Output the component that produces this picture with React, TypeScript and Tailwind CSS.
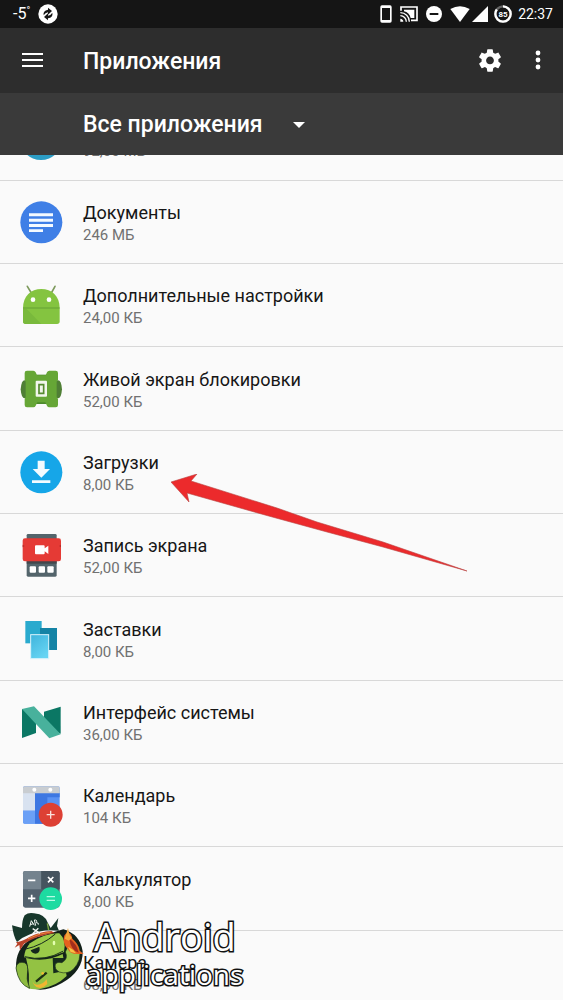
import { ReactNode } from 'react'

interface AppEntry {
  name: string
  size: string
  icon?: ReactNode
}

const apps: AppEntry[] = [
  { name: 'Документы', size: '246 МБ', icon: <DocsIcon /> },
  { name: 'Дополнительные настройки', size: '24,00 КБ', icon: <RobotIcon /> },
  { name: 'Живой экран блокировки', size: '52,00 КБ', icon: <LockScreenIcon /> },
  { name: 'Загрузки', size: '8,00 КБ', icon: <DownloadsIcon /> },
  { name: 'Запись экрана', size: '52,00 КБ', icon: <RecorderIcon /> },
  { name: 'Заставки', size: '8,00 КБ', icon: <ScreensaverIcon /> },
  { name: 'Интерфейс системы', size: '36,00 КБ', icon: <NougatIcon /> },
  { name: 'Календарь', size: '104 КБ', icon: <CalendarIcon /> },
  { name: 'Калькулятор', size: '8,00 КБ', icon: <CalculatorIcon /> },
  { name: 'Камера', size: '68,00 КБ' },
]

function AppIcon({ children }: { children: ReactNode }) {
  return (
    <svg viewBox="0 0 126 126" className="w-full h-full overflow-visible" aria-hidden="true">
      {children}
    </svg>
  )
}

function DocsIcon() {
  return (
    <AppIcon>
      <circle cx="64" cy="64" r="63" fill="#3f7fe6" />
      <path d="M27 37h72v9H27zM27 53h72v9H27zM27 69h72v9H27zM27 85h42v8H27z" fill="#f4faff" />
    </AppIcon>
  )
}

function RobotIcon() {
  return (
    <AppIcon>
      <path d="M22 7l12 20M105 7L94 27" stroke="#7d9a5c" strokeWidth="5" strokeLinecap="round" />
      <path d="M9 72C9 36 33 15 64 15s55 21 55 57v40q0 8-8 8H17q-8 0-8-8z" fill="#84c440" />
      <path d="M20 75l44 45H17q-8 0-8-8V75z" fill="#79b93c" />
      <path d="M9 72h110" stroke="#64a034" strokeWidth="3" />
      <circle cx="39" cy="47" r="7" fill="#fff" />
      <circle cx="87" cy="47" r="7" fill="#fff" />
    </AppIcon>
  )
}

function LockScreenIcon() {
  return (
    <AppIcon>
      <path d="M14 37h100q10 0 12 27-2 27-12 27H14Q4 91 2 64 4 37 14 37z" fill="#4f7f35" />
      <path d="M40 20h48v88H40z" fill="#4c8a2c" />
      <path
        d="M21 8h19q5 0 7 5l4 9h26l4-9q2-5 7-5h19q7 0 7 7v20l-4 6v46l4 6v18q0 7-7 7H88q-5 0-7-5l-5-10H52l-5 10q-2 5-7 5H21q-7 0-7-7V93l3-6V41l-3-6V15q0-7 7-7z"
        fill="#66a636"
      />
      <rect x="47" y="38" width="34" height="48" rx="3" fill="#f2f7ec" />
      <path d="M57 50h14v26H57z" fill="none" stroke="#568c30" strokeWidth="5" />
    </AppIcon>
  )
}

function DownloadsIcon() {
  return (
    <AppIcon>
      <circle cx="64" cy="64" r="63" fill="#16a6e8" />
      <path d="M53 29h21v25h16L64 80 38 54h15zM36 88h55v8H36z" fill="#f4fbff" />
    </AppIcon>
  )
}

function RecorderIcon() {
  return (
    <AppIcon>
      <rect x="20" y="0" width="90" height="128" rx="4" fill="#53646b" />
      <path d="M20 80h90v9H20z" fill="#43474c" />
      <rect x="8" y="13" width="115" height="69" rx="7" fill="#e53a35" />
      <path d="M8 40l6-4-6-4zM123 40l-6-4 6-4z" fill="#b52b28" />
      <path d="M48 34h23q3 0 3 3v6l11-8v25l-11-8v6q0 3-3 3H48q-3 0-3-3V37q0-3 3-3z" fill="#fff" />
      <rect x="29" y="97" width="19" height="19" rx="3" fill="#fff" />
      <rect x="56" y="97" width="19" height="19" rx="3" fill="#fff" />
      <rect x="82" y="97" width="19" height="19" rx="3" fill="#fff" />
    </AppIcon>
  )
}

function ScreensaverIcon() {
  return (
    <AppIcon>
      <defs>
        <linearGradient id="pane" x1="0" y1="0" x2="0.6" y2="1">
          <stop offset="0" stopColor="#3fb4dc" />
          <stop offset="1" stopColor="#66d4f3" />
        </linearGradient>
      </defs>
      <rect x="16" y="9" width="49" height="67" fill="#2aaace" />
      <rect x="60" y="30" width="51" height="66" fill="#1483a5" />
      <rect x="32" y="50" width="54" height="72" fill="url(#pane)" stroke="#d9f4fc" strokeWidth="3" />
    </AppIcon>
  )
}

function NougatIcon() {
  return (
    <AppIcon>
      <path d="M6 24l42 10v62L6 111z" fill="#0b7764" />
      <path d="M72 32l50-15v81L72 75z" fill="#0b7764" />
      <path d="M6 24l36-8 80 84-34 12z" fill="#48b19c" />
    </AppIcon>
  )
}

function CalendarIcon() {
  return (
    <AppIcon>
      <rect x="9" y="7" width="110" height="112" rx="5" fill="#5a92f4" />
      <path d="M9 27h36v53H9z" fill="#d8e2f0" />
      <path d="M45 27h74v13H82v79H45z" fill="#3d77e2" />
      <path d="M9 80h36v39H14q-5 0-5-5z" fill="#6ba0f6" />
      <path d="M14 7h100q5 0 5 5v16H9V12q0-5 5-5z" fill="#c9cdd1" />
      <circle cx="43" cy="17" r="6" fill="#fff" />
      <circle cx="91" cy="17" r="6" fill="#fff" />
      <circle cx="92" cy="92" r="36" fill="#dd4034" />
      <path d="M92 80v24M80 92h24" stroke="#fbe0dc" strokeWidth="4" />
    </AppIcon>
  )
}

function CalculatorIcon() {
  return (
    <AppIcon>
      <rect x="9" y="9" width="110" height="110" rx="7" fill="#52616d" />
      <path d="M16 9h48v55H9V16q0-7 7-7z" fill="#74838e" />
      <path d="M64 9h48q7 0 7 7v48H64z" fill="#46545f" />
      <path d="M24 37h22M24 91h22M35 80v22M84 27l16 16M100 27L84 43" stroke="#fff" strokeWidth="5" />
      <circle cx="92" cy="92" r="34" fill="#1ddba1" />
      <path d="M80 86h25M80 97h25" stroke="#b8fbe5" strokeWidth="4" />
    </AppIcon>
  )
}

function StatusBar() {
  return (
    <div className="h-7 shrink-0 flex items-center justify-between bg-[#151515] pl-[13px] pr-2.5 text-white">
      <div className="flex items-center gap-2">
        <span className="text-base leading-4">
          -5<sup className="text-[10px]">°</sup>
        </span>
        <svg viewBox="0 0 60 60" className="w-5 h-5" aria-hidden="true">
          <circle cx="30" cy="30" r="29" fill="#fff" />
          <path d="M17 34q-3-14 13-17v-6l12 10-12 11v-7q-8 1-13 9z" fill="#151515" />
          <path d="M43 26q3 14-13 17v6L18 39l12-11v7q8-1 13-9z" fill="#151515" />
        </svg>
      </div>
      <div className="flex items-center">
        <svg viewBox="0 0 36 54" className="w-3 h-[18px] mr-2" aria-hidden="true">
          <rect x="1" y="1" width="34" height="52" rx="5" fill="#fff" />
          <path d="M6 9h24v36H6z" fill="#151515" />
        </svg>
        <svg viewBox="0 0 54 48" className="w-[18px] h-4 mr-2" fill="none" stroke="#fff" aria-hidden="true">
          <path d="M3 14V3h48v40H33" strokeWidth="5" />
          <path d="M12 11h31v25H32C30 25 22 18 12 16z" fill="#fff" stroke="none" />
          <path d="M1 20c15 0 27 12 27 27M1 29c10 0 18 8 18 18" strokeWidth="4" />
          <path d="M1 38c5 0 9 4 9 9H1z" fill="#fff" stroke="none" />
        </svg>
        <svg viewBox="0 0 48 48" className="w-4 h-4 mr-2" aria-hidden="true">
          <circle cx="24" cy="24" r="24" fill="#fff" />
          <path d="M11 21h26v6H11z" fill="#151515" />
        </svg>
        <svg viewBox="0 0 60 48" className="w-5 h-4 mr-0.5" aria-hidden="true">
          <path d="M1 9Q30-7 59 9L30 48z" fill="#fff" />
        </svg>
        <svg viewBox="0 0 48 48" className="w-4 h-4 mr-1.5" aria-hidden="true">
          <path d="M48 0v48H0z" fill="#fff" />
        </svg>
        <svg viewBox="0 0 54 54" className="w-[18px] h-[18px] mr-1.5" aria-label="85%">
          <circle cx="27" cy="27" r="23" fill="none" stroke="#666" strokeWidth="7" />
          <circle
            cx="27"
            cy="27"
            r="23"
            fill="none"
            stroke="#fff"
            strokeWidth="7"
            pathLength="100"
            strokeDasharray="85 15"
            transform="rotate(-90 27 27)"
          />
          <text x="27" y="35" textAnchor="middle" fontSize="24" fontWeight="700" fill="#fff">
            85
          </text>
        </svg>
        <span className="text-sm">22:37</span>
      </div>
    </div>
  )
}

function Toolbar() {
  return (
    <header className="h-[65px] shrink-0 flex items-center bg-[#2d2d2d] pl-5 pr-[15px] text-white">
      <button aria-label="Меню" className="w-6 h-6 mr-[39px]">
        <svg viewBox="0 0 24 24" className="w-6 h-6" fill="none" stroke="currentColor" strokeWidth={2}>
          <path d="M2 5h21M2 11h21M2 17h21" />
        </svg>
      </button>
      <h1 className="flex-1 pt-0.5 text-[23px] leading-7 font-medium">Приложения</h1>
      <button aria-label="Настройки" className="w-7 h-7 mr-6">
        <svg viewBox="0 0 24 25" className="w-7 h-7" fill="currentColor">
          <path d="M19.43 12.98c.04-.32.07-.64.07-.98s-.03-.66-.07-.98l2.11-1.65c.19-.15.24-.42.12-.64l-2-3.46c-.12-.22-.39-.3-.61-.22l-2.49 1c-.52-.4-1.08-.73-1.69-.98l-.38-2.65C14.46 2.18 14.25 2 14 2h-4c-.25 0-.46.18-.49.42l-.38 2.65c-.61.25-1.17.59-1.69.98l-2.49-1c-.23-.09-.49 0-.61.22l-2 3.46c-.13.22-.07.49.12.64l2.11 1.65c-.04.32-.07.65-.07.98s.03.66.07.98l-2.11 1.65c-.19.15-.24.42-.12.64l2 3.46c.12.22.39.3.61.22l2.49-1c.52.4 1.08.73 1.69.98l.38 2.65c.03.24.24.42.49.42h4c.25 0 .46-.18.49-.42l.38-2.65c.61-.25 1.17-.59 1.69-.98l2.49 1c.23.09.49 0 .61-.22l2-3.46c.12-.22.07-.49-.12-.64l-2.11-1.65zM12 15.5c-1.93 0-3.5-1.57-3.5-3.5s1.57-3.5 3.5-3.5 3.5 1.57 3.5 3.5-1.57 3.5-3.5 3.5z" />
        </svg>
      </button>
      <button aria-label="Ещё" className="w-5 h-7">
        <svg viewBox="0 0 20 28" className="w-5 h-7" fill="currentColor">
          <circle cx="10" cy="6" r="2.4" />
          <circle cx="10" cy="13" r="2.4" />
          <circle cx="10" cy="20" r="2.4" />
        </svg>
      </button>
    </header>
  )
}

function FilterBar() {
  return (
    <div className="h-[62px] shrink-0 flex items-center bg-[#3a3a3a] pt-0.5 pl-[83px] text-white">
      <select
        aria-label="Фильтр приложений"
        className="appearance-none bg-transparent pr-12 text-[23px] leading-7 font-medium focus:outline-none"
      >
        <option>Все приложения</option>
      </select>
      <svg viewBox="0 0 12 6" className="w-3 h-1.5 -ml-[18px] pointer-events-none" fill="currentColor" aria-hidden="true">
        <path d="M0 0h12L6 6z" />
      </svg>
    </div>
  )
}

function AppRow({ name, size, icon }: AppEntry) {
  return (
    <li className="h-[83px] nth-[3n]:h-21 shrink-0 flex items-center gap-[21px] border-b border-[#d8d8d8] pl-5">
      <div className="w-[42px] h-[42px]">{icon}</div>
      <div className="pt-0.5">
        <div className="text-lg leading-6 text-[#161616]">{name}</div>
        <div className="text-[15px] leading-5 text-[#717171]">{size}</div>
      </div>
    </li>
  )
}

function PirateLogo() {
  return (
    <svg viewBox="0 0 240 264" className="w-20 h-22" aria-hidden="true">
      {/* Backdrop */}
      <path d="M24 180Q22 120 70 92l96-28q50 14 58 66 2 60-62 95-60 34-104 10-30-22-34-55z" fill="#13211a" />
      {/* Body */}
      <path d="M54 150q60 14 110-12l12 66q-30 30-76 38-20 4-40-1 8-40-6-91z" fill="#93c243" />
      {/* Left arm */}
      <path d="M24 180q2-17 18-17 18 0 17 22-6 28 6 56-34-12-41-61z" fill="#8dbb40" stroke="#1b331b" strokeWidth="2" />
      {/* Right arm */}
      <path d="M134 150h34v10l-14 12v20l-18 4z" fill="#152a1c" />
      <path
        d="M172 132l12-26q22-4 30 16 8 34-18 62-18 16-42 8-16-8-12-24 6-8 20-4 20-12 10-32z"
        fill="#9ac84a"
        stroke="#1b331b"
        strokeWidth="2"
      />
      {/* Head */}
      <path d="M48 148q2-24 18-42 46-32 88-30 22 20 14 56-60 26-120 16z" fill="#9aca49" />
      <path d="M50 146q60 16 116-17" fill="none" stroke="#1b331b" strokeWidth="3" />
      <path d="M50 124q54-12 92-46" fill="none" stroke="#15271d" strokeWidth="3" />
      <path d="M68 127l26-11q4 14-6 20-14 4-20-9z" fill="#15271d" />
      <ellipse cx="138" cy="105" rx="4" ry="7" fill="#e4ffb0" />
      {/* Bandana */}
      <path d="M24 103q24-4 40-16 34-17 66-18l10 6q-48 6-92 32l-12 20-2-16-14 8 8-12z" fill="#b9432a" />
      {/* Hat */}
      <path d="M12 52l30 8q0-24 8-38 12-10 28-6 36 4 42 30l8 14 23-30-4 24 6 14q-50-6-90 12-22 8-36 22-10-14-15-50z" fill="#17372b" />
      <path d="M60 92q32-16 68-20" fill="none" stroke="#e9883a" strokeWidth="3" />
      <path d="M118 46l4 20" stroke="#7fa844" strokeWidth="4" />
      <path d="M65 56l5-18 9 14M67 50l9-3M83 53l-4-17q10-1 6 8 8 0 6 6" fill="none" stroke="#f5f7f3" strokeWidth="3" />
      <path d="M74 62l22 14M74 77l17-16" stroke="#f5f7f3" strokeWidth="4" />
      {/* Parrot */}
      <path d="M167 100q-2-22 12-26 12 0 14 18 18 14 22 36l12 10-18 0q-24 0-30-16-8-4-12-22z" fill="#e5611f" />
      <path d="M184 92q22 14 28 42-24-8-28-42z" fill="#a32d1c" />
      <path d="M170 92l10-32 5 22 7 8-10 8z" fill="#f3a63a" />
      <path d="M180 116l16 10 8 10-16-4z" fill="#f7c344" />
      {/* Sword and anchor */}
      <path d="M84 221l32-27" stroke="#1d3014" strokeWidth="7" />
      <path d="M70 206q2 22 16 24 16 2 30-16l2 14-10 8-10 4q-22 2-28-34z" fill="#f1b530" />
      <circle cx="104" cy="196" r="4" fill="#f1bd32" />
    </svg>
  )
}

function Watermark() {
  return (
    <div className="absolute bottom-1 left-2 flex items-end pointer-events-none">
      <PirateLogo />
      <div className="-ml-0.5 pb-1 font-['Open_Sans',sans-serif] text-white whitespace-nowrap [-webkit-text-stroke:3px_#111] [paint-order:stroke_fill]">
        <div className="pl-2 text-[38px] leading-10">Android</div>
        <div className="text-[28px] leading-9">applications</div>
      </div>
    </div>
  )
}

function PointerArrow() {
  return (
    <svg viewBox="0 0 296 98" className="absolute left-[171px] top-[474px] w-[296px] h-[98px] pointer-events-none" aria-hidden="true">
      <path
        d="M0 8L26 0l-6 7 86 27 40 14 66 20 84 29-84-24-56-15-62-17L16 19l2 9z"
        fill="#ec2a2c"
        stroke="#b8413f"
        strokeWidth="0.6"
      />
    </svg>
  )
}

export default function App() {
  return (
    <div className="relative h-screen flex flex-col overflow-hidden bg-[#fafafa] font-[Roboto,sans-serif]">
      <StatusBar />
      <Toolbar />
      <FilterBar />
      <main className="flex-1 min-h-0 overflow-hidden">
        {/* Row scrolled under the filter bar */}
        <div className="h-[26px] overflow-hidden flex flex-col justify-end border-b border-[#d8d8d8]">
          <div className="h-[83px] shrink-0 flex items-center gap-[21px] pl-5">
            <div className="w-[42px] h-[42px] rounded-full bg-[#2b9cc4]" />
            <div className="pt-6 text-[15px] leading-5 text-[#717171]">92,00 МБ</div>
          </div>
        </div>
        <ul className="flex flex-col">
          {apps.map((app) => (
            <AppRow key={app.name} {...app} />
          ))}
        </ul>
      </main>
      <PointerArrow />
      <Watermark />
    </div>
  )
}
